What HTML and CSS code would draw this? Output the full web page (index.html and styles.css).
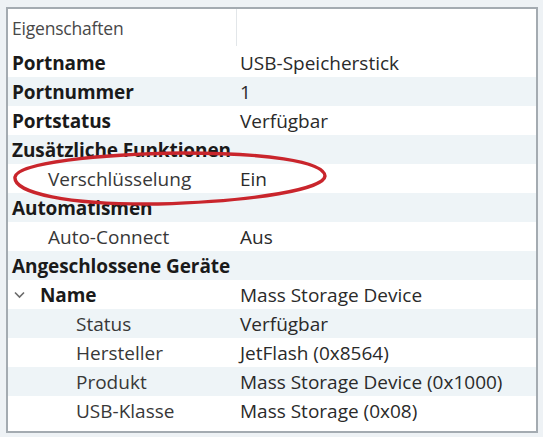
FILE: index.html
```html
<!DOCTYPE html>
<html lang="de">
<head>
<meta charset="utf-8">
<title>Eigenschaften</title>
<link rel="stylesheet" href="styles.css">
</head>
<body>
<div class="panel">
  <div class="header">
    <div class="hcell name-col">Eigenschaften</div>
    <div class="hcell value-col"></div>
  </div>
  <div class="rows">
    <div class="row"><div class="key bold lvl0">Portname</div><div class="val">USB-Speicherstick</div></div>
    <div class="row alt"><div class="key bold lvl0">Portnummer</div><div class="val">1</div></div>
    <div class="row"><div class="key bold lvl0">Portstatus</div><div class="val">Verfügbar</div></div>
    <div class="row alt"><div class="key bold lvl0">Zusätzliche Funktionen</div><div class="val"></div></div>
    <div class="row"><div class="key lvl1">Verschlüsselung</div><div class="val">Ein</div></div>
    <div class="row alt"><div class="key bold lvl0">Automatismen</div><div class="val"></div></div>
    <div class="row"><div class="key lvl1">Auto-Connect</div><div class="val">Aus</div></div>
    <div class="row alt"><div class="key bold lvl0">Angeschlossene Geräte</div><div class="val"></div></div>
    <div class="row"><div class="key bold lvl0 expander"><svg class="chev" width="11" height="8" viewBox="0 0 11 8"><polyline points="1,1.5 5.5,6 10,1.5" fill="none" stroke="#6b6b6b" stroke-width="1.6"/></svg><span>Name</span></div><div class="val">Mass Storage Device</div></div>
    <div class="row alt"><div class="key lvl2">Status</div><div class="val">Verfügbar</div></div>
    <div class="row"><div class="key lvl2">Hersteller</div><div class="val">JetFlash (0x8564)</div></div>
    <div class="row alt"><div class="key lvl2">Produkt</div><div class="val">Mass Storage Device (0x1000)</div></div>
    <div class="row"><div class="key lvl2">USB-Klasse</div><div class="val">Mass Storage (0x08)</div></div>
  </div>
  <svg class="mark" width="330" height="62" viewBox="0 0 330 62">
    <path d="M 7 28 C 9 14, 90 5, 175 4 C 255 4, 316 12, 317 27 C 316 40, 250 52, 150 55 C 60 56, 5 44, 7 28 Z" fill="none" stroke="#c9252c" stroke-width="3.4"/>
  </svg>
</div>
</body>
</html>
```
FILE: styles.css
```css
*, *::before, *::after {
  box-sizing: border-box;
}
html, body {
  margin: 0;
  padding: 0;
}
body {
  background: #eef2f5;
  font-family: "Open Sans", "Noto Sans", "DejaVu Sans", sans-serif;
  font-size: 19px;
  color: #2b2b2b;
  width: 543px;
  height: 437px;
  overflow: hidden;
}
.panel {
  position: relative;
  margin: 7px 0 0 6px;
  width: 532px;
  height: 426px;
  border: 2px solid #a4abb1;
  background: #ffffff;
}
.header {
  display: flex;
  height: 39px;
}
.hcell {
  display: flex;
  align-items: center;
  color: #484848;
  font-size: 17.5px;
  letter-spacing: -0.2px;
}
.name-col {
  width: 229px;
  padding-left: 4px;
  border-right: 1px solid #e2e6e9;
  margin-bottom: 2px;
}
.rows {
  display: flex;
  flex-direction: column;
}
.row {
  display: flex;
  height: 29px;
  align-items: center;
}
.row.alt {
  background: #eef4f7;
}
.key {
  width: 232px;
  flex: none;
  white-space: nowrap;
  color: #383838;
}
.bold {
  font-weight: 700;
  color: #1a1a1a;
  letter-spacing: -0.1px;
}
.lvl0 { padding-left: 4px; }
.lvl1 { padding-left: 40px; }
.lvl2 { padding-left: 68px; }
.expander {
  display: flex;
  align-items: center;
  padding-left: 6px;
}
.chev {
  margin-right: 15px;
}
.val {
  white-space: nowrap;
  color: #2a2a2a;
}
.mark {
  position: absolute;
  left: 0;
  top: 140px;
}
```
